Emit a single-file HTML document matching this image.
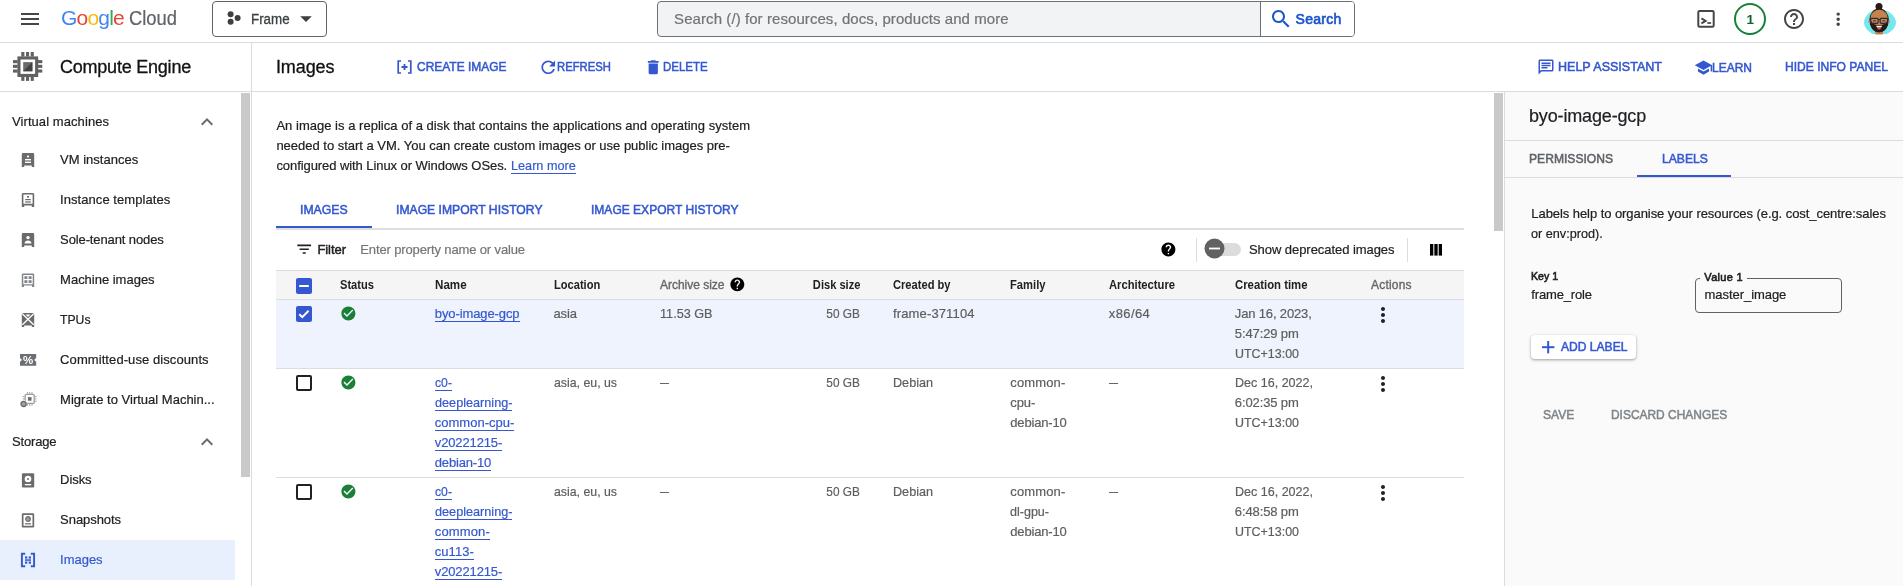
<!DOCTYPE html>
<html lang="en"><head><meta charset="utf-8"><title>Images – Compute Engine – Frame – Google Cloud console</title>
<style>
*{box-sizing:border-box;margin:0;padding:0}
html,body{width:1903px;height:586px;overflow:hidden;background:#fff}
body{position:relative;font-family:"Liberation Sans", sans-serif;font-size:13px;color:#202124}
.t{position:absolute;white-space:nowrap;line-height:1;text-decoration:none}
.i{position:absolute;display:block;overflow:visible}
.b{position:absolute}
#app{position:absolute;left:0;top:0;width:1903px;height:586px;overflow:hidden;will-change:transform}
</style></head>
<body>
<div id="app">
<header>
<div class="b" style="left:0px;top:42px;width:1903px;height:1px;background:#dadce0"></div>
<svg class="i" style="left:18px;top:7px" width="24" height="24" viewBox="0 0 24 24" fill="#444746" ><path d="M3 18h18v-2H3v2zm0-5h18v-2H3v2zm0-7v2h18V6H3z"/></svg>
<span class="t" style="left:61px;top:7px;font-size:21px;letter-spacing:-0.8px"><span style="color:#4285f4">G</span><span style="color:#ea4335">o</span><span style="color:#fbbc04">o</span><span style="color:#4285f4">g</span><span style="color:#34a853">l</span><span style="color:#ea4335">e</span></span>
<span class="t" style="font-size:20.5px;color:#5f6368;top:8px;left:129.00px;-webkit-text-stroke:0.2px #5f6368;transform:scaleX(0.8961);transform-origin:left 50%;">Cloud</span>
<div class="b" style="left:212px;top:1px;width:115px;height:36px;border:1px solid #5f6368;border-radius:4px"></div>
<svg class="i" style="left:226px;top:10px" width="16" height="16" viewBox="0 0 16 16" fill="#3c4043"><circle cx="4.6" cy="4.2" r="3"/><circle cx="4.6" cy="11.8" r="3"/><circle cx="11.6" cy="8" r="3"/></svg>
<span class="t" style="font-size:14px;color:#3c4043;top:12px;left:250.70px;-webkit-text-stroke:0.3px #3c4043;transform:scaleX(0.9542);transform-origin:left 50%;">Frame</span>
<svg class="i" style="left:300px;top:16px" width="12" height="7" viewBox="0 0 12 7" fill="#3c4043"><path d="M.2.3h11.600L6 6.100z"/></svg>
<div class="b" style="left:657px;top:1px;width:698px;height:36px;border:1px solid #6b7075;border-radius:4px;background:#f1f3f4"></div>
<div class="b" style="left:1260px;top:2px;width:94px;height:34px;background:#fff;border-left:1px solid #6b7075;border-radius:0 3px 3px 0"></div>
<span class="t" style="font-size:15px;color:#717375;top:11px;left:674.10px;-webkit-text-stroke:0.2px #717375;letter-spacing:0.075px;">Search (/) for resources, docs, products and more</span>
<svg class="i" style="left:1269px;top:7px" width="24" height="24" viewBox="0 0 24 24" fill="#1b55cb" ><path d="M15.5 14h-.79l-.28-.27C15.41 12.59 16 11.11 16 9.5 16 5.91 13.09 3 9.5 3S3 5.91 3 9.5 5.91 16 9.5 16c1.61 0 3.09-.59 4.23-1.57l.27.28v.79l5 4.99L20.49 19l-4.99-5zm-6 0C7.01 14 5 11.99 5 9.5S7.01 5 9.5 5 14 7.01 14 9.5 11.99 14 9.5 14z"/></svg>
<span class="t" style="font-size:14px;color:#1b55cb;top:12px;left:1295.60px;-webkit-text-stroke:0.65px #1b55cb;letter-spacing:0.288px;">Search</span>
<svg class="i" style="left:1696px;top:9px" width="20" height="20" viewBox="0 0 20 20" fill="none" stroke="#444746"><rect x="2.300" y="2" width="15.400" height="15.700" rx="1.300" stroke-width="2"/><path d="M5.400 9.400l4.300 2.500-4.300 2.500" stroke-width="1.900"/><path d="M11.300 14h3.800" stroke-width="1.700"/></svg>
<div class="b" style="left:1734px;top:3px;width:32px;height:32px;border:2px solid #188038;border-radius:50%"></div>
<span class="t" style="font-size:13.5px;color:#0d652d;top:13px;left:1746.40px;font-weight:700;">1</span>
<svg class="i" style="left:1781.7px;top:7px" width="24" height="24" viewBox="0 0 24 24" fill="#444746" ><path d="M11 18h2v-2h-2v2zm1-16C6.48 2 2 6.48 2 12s4.48 10 10 10 10-4.48 10-10S17.52 2 12 2zm0 18c-4.41 0-8-3.59-8-8s3.59-8 8-8 8 3.59 8 8-3.59 8-8 8zm0-14c-2.21 0-4 1.79-4 4h2c0-1.1.9-2 2-2s2 .9 2 2c0 2-3 1.75-3 5h2c0-2.25 3-2.5 3-5 0-2.21-1.79-4-4-4z"/></svg>
<svg class="i" style="left:1827.6px;top:8.8px" width="20.4" height="20.4" viewBox="0 0 24 24" fill="#444746" ><path d="M12 8c1.1 0 2-.9 2-2s-.9-2-2-2-2 .9-2 2 .9 2 2 2zm0 2c-1.1 0-2 .9-2 2s.9 2 2 2 2-.9 2-2-.9-2-2-2zm0 6c-1.1 0-2 .9-2 2s.9 2 2 2 2-.9 2-2-.9-2-2-2z"/></svg>
<svg class="i" style="left:1860px;top:0px" width="40" height="40" viewBox="0 0 40 40">
<path d="M4 22.500c0-4 3.500-9.500 8-11.500h15c5 2 9 7.500 9 11.500 0 5-5 9.500-9.500 11.500H13c-4.500-2-9-6.500-9-11.500z" fill="#74e8ee"/>
<rect x="15.200" y="29" width="7.800" height="5.400" rx="1" fill="#c17f4f"/>
<circle cx="19" cy="6.400" r="3.500" fill="#2a1a15"/>
<ellipse cx="19.100" cy="20.200" rx="9.700" ry="12" fill="#2a1a15"/>
<circle cx="9.800" cy="21.600" r="1.400" fill="#c17f4f"/>
<circle cx="28.500" cy="21.600" r="1.400" fill="#c17f4f"/>
<ellipse cx="19.100" cy="18" rx="8.600" ry="8.300" fill="#c6824f"/>
<path d="M10.400 22.500c2 1.500 4 2.300 8.700 2.300s6.700-.8 8.700-2.300c0 6-3.700 9.700-8.700 9.700s-8.700-3.700-8.700-9.700z" fill="#2a1a15"/>
<path d="M14.200 23.500c1.500-.9 3-1.200 4.900-1.200s3.400.3 4.900 1.200c-1.500.9-3 1.400-4.900 1.400s-3.400-.5-4.900-1.400z" fill="#c6824f"/>
<path d="M16.200 25.700h5.800c-.1.800-.4 1.400-.9 1.800h-4c-.5-.4-.8-1-.9-1.800z" fill="#fff"/>
<path d="M17.100 27.700h4c-.4 1.300-1.100 1.900-2 1.900s-1.600-.6-2-1.900z" fill="#e8566f"/>
<rect x="10.700" y="18.300" width="7.400" height="5" rx="1" fill="none" stroke="#2b2f33" stroke-width="1.200"/>
<rect x="20.200" y="18.300" width="7.400" height="5" rx="1" fill="none" stroke="#2b2f33" stroke-width="1.200"/>
<path d="M18 19.500h2.300M9.600 19.300h1.200M27.500 19.300h1.200" stroke="#2b2f33" stroke-width="1.100"/>
<path d="M13 21.200c.9-.7 2-.7 2.900 0M22.400 21.200c.9-.7 2-.7 2.900 0" stroke="#2a1a15" stroke-width=".9" fill="none"/>
</svg>
</header>
<section>
<div class="b" style="left:0px;top:91px;width:1903px;height:1px;background:#dadce0"></div>
<div class="b" style="left:251px;top:43px;width:1px;height:543px;background:#dadce0"></div>
<svg class="i" style="left:12.900px;top:52.100px" width="29.300" height="28.900" viewBox="0 0 29.300 28.900"><rect x="4.400" y="4.400" width="20.800" height="20.600" fill="#616161"/><rect x="7.500" y="7.500" width="14.600" height="14.400" fill="#fff"/><rect x="10.200" y="10.100" width="9.200" height="9.200" fill="#6b6b6b"/><path d="M10.200 19.300l9.200-9.200v9.200z" fill="#424242"/><rect x="8.3" y="0" width="3.100" height="4.600" fill="#616161"/><rect x="8.3" y="24.800" width="3.100" height="4.100" fill="#616161"/><rect x="0" y="8.1" width="4.600" height="3.100" fill="#616161"/><rect x="25" y="8.1" width="4.300" height="3.100" fill="#616161"/><rect x="13" y="0" width="3.100" height="4.600" fill="#616161"/><rect x="13" y="24.800" width="3.100" height="4.100" fill="#616161"/><rect x="0" y="12.8" width="4.600" height="3.100" fill="#616161"/><rect x="25" y="12.8" width="4.300" height="3.100" fill="#616161"/><rect x="17.7" y="0" width="3.100" height="4.600" fill="#616161"/><rect x="17.7" y="24.800" width="3.100" height="4.100" fill="#616161"/><rect x="0" y="17.5" width="4.600" height="3.100" fill="#616161"/><rect x="25" y="17.5" width="4.300" height="3.100" fill="#616161"/></svg>
<h1 class="t" style="font-size:18px;color:#111;top:58px;left:60.00px;-webkit-text-stroke:0.3px #111;letter-spacing:-0.223px;font-weight:400;">Compute Engine</h1>
<h2 class="t" style="font-size:18px;color:#111;top:58px;left:275.90px;-webkit-text-stroke:0.3px #111;letter-spacing:-0.086px;font-weight:400;">Images</h2>
<svg class="i" style="left:396.500px;top:60px" width="15" height="14" viewBox="0 0 15 14" fill="none" stroke="#3558d0" stroke-width="1.700"><path d="M4 1H1.200v12H4M11 1h2.800v12H11"/><path d="M7.500 4v6M4.500 7h6" stroke-width="1.800"/></svg>
<span class="t" style="font-size:13px;color:#3558d0;top:60px;left:417.20px;-webkit-text-stroke:0.55px #3558d0;transform:scaleX(0.9200);transform-origin:left 50%;">CREATE IMAGE</span>
<svg class="i" style="left:537.7px;top:56.7px" width="20.5" height="20.5" viewBox="0 0 24 24" fill="#3558d0" ><path d="M17.65 6.35C16.2 4.9 14.21 4 12 4c-4.42 0-7.99 3.58-7.99 8s3.57 8 7.99 8c3.73 0 6.84-2.55 7.73-6h-2.08c-.82 2.33-3.04 4-5.65 4-3.31 0-6-2.69-6-6s2.69-6 6-6c1.66 0 3.14.69 4.22 1.78L13 11h7V4l-2.35 2.35z"/></svg>
<span class="t" style="font-size:13px;color:#3558d0;top:60px;left:557.40px;-webkit-text-stroke:0.55px #3558d0;transform:scaleX(0.8676);transform-origin:left 50%;">REFRESH</span>
<svg class="i" style="left:643.6px;top:57.7px" width="18.5" height="18.5" viewBox="0 0 24 24" fill="#3558d0" ><path d="M6 19c0 1.1.9 2 2 2h8c1.1 0 2-.9 2-2V7H6v12zM19 4h-3.5l-1-1h-5l-1 1H5v2h14V4z"/></svg>
<span class="t" style="font-size:13px;color:#3558d0;top:60px;left:662.70px;-webkit-text-stroke:0.55px #3558d0;transform:scaleX(0.8838);transform-origin:left 50%;">DELETE</span>
<svg class="i" style="left:1537px;top:57.5px" width="18" height="18" viewBox="0 0 24 24" fill="#3558d0" ><path d="M4 4h16v12H5.17L4 17.17V4m0-2c-1.1 0-1.99.9-1.99 2L2 22l4-4h14c1.1 0 2-.9 2-2V4c0-1.1-.9-2-2-2H4zm2 10h8v2H6v-2zm0-3h12v2H6V9zm0-3h12v2H6V6z"/></svg>
<span class="t" style="font-size:13px;color:#3558d0;top:60px;left:1558.20px;-webkit-text-stroke:0.55px #3558d0;transform:scaleX(0.9638);transform-origin:left 50%;">HELP ASSISTANT</span>
<svg class="i" style="left:1693.5px;top:57.5px" width="19" height="19" viewBox="0 0 24 24" fill="#3558d0" ><path d="M5 13.18v4L12 21l7-3.82v-4L12 17l-7-3.82zM12 3L1 9l11 6 9-4.91V17h2V9L12 3z"/></svg>
<span class="t" style="font-size:13px;color:#3558d0;top:61px;left:1711.60px;-webkit-text-stroke:0.55px #3558d0;transform:scaleX(0.9225);transform-origin:left 50%;">LEARN</span>
<span class="t" style="font-size:13px;color:#3558d0;top:60px;left:1784.70px;-webkit-text-stroke:0.55px #3558d0;transform:scaleX(0.9278);transform-origin:left 50%;">HIDE INFO PANEL</span>
</section>
<nav>
<div class="b" style="left:0px;top:540px;width:235px;height:40px;background:#e8f0fe"></div>
<div class="b" style="left:241.4px;top:93px;width:8.2px;height:384px;background:#c9c9c9"></div>
<span class="t" style="font-size:13px;color:#202124;top:115px;left:12.00px;-webkit-text-stroke:0.2px #202124;letter-spacing:0.075px;">Virtual machines</span>
<svg class="i" style="left:195.2px;top:110px" width="24" height="24" viewBox="0 0 24 24" fill="#6b6b6b" ><path d="M12 8l-6 6 1.41 1.41L12 10.83l4.59 4.58L18 14z"/></svg>
<span class="t" style="font-size:13px;color:#202124;top:435px;left:12.00px;-webkit-text-stroke:0.2px #202124;letter-spacing:-0.174px;">Storage</span>
<svg class="i" style="left:195.2px;top:430px" width="24" height="24" viewBox="0 0 24 24" fill="#6b6b6b" ><path d="M12 8l-6 6 1.41 1.41L12 10.83l4.59 4.58L18 14z"/></svg>
<span class="t" style="font-size:13px;color:#202124;top:153px;left:60.10px;-webkit-text-stroke:0.2px #202124;letter-spacing:0.005px;">VM instances</span>
<span class="t" style="font-size:13px;color:#202124;top:193px;left:60.10px;-webkit-text-stroke:0.2px #202124;letter-spacing:0.057px;">Instance templates</span>
<span class="t" style="font-size:13px;color:#202124;top:233px;left:60.10px;-webkit-text-stroke:0.2px #202124;letter-spacing:-0.114px;">Sole-tenant nodes</span>
<span class="t" style="font-size:13px;color:#202124;top:273px;left:60.10px;-webkit-text-stroke:0.2px #202124;letter-spacing:-0.012px;">Machine images</span>
<span class="t" style="font-size:13px;color:#202124;top:313px;left:60.10px;-webkit-text-stroke:0.2px #202124;transform:scaleX(0.9385);transform-origin:left 50%;">TPUs</span>
<span class="t" style="font-size:13px;color:#202124;top:353px;left:60.10px;-webkit-text-stroke:0.2px #202124;letter-spacing:0.083px;">Committed-use discounts</span>
<span class="t" style="font-size:13px;color:#202124;top:393px;left:60.10px;-webkit-text-stroke:0.2px #202124;letter-spacing:0.004px;">Migrate to Virtual Machin...</span>
<span class="t" style="font-size:13px;color:#202124;top:473px;left:60.10px;-webkit-text-stroke:0.2px #202124;letter-spacing:-0.070px;">Disks</span>
<span class="t" style="font-size:13px;color:#202124;top:513px;left:60.10px;-webkit-text-stroke:0.2px #202124;letter-spacing:-0.055px;">Snapshots</span>
<span class="t" style="font-size:13px;color:#3558d0;top:553px;left:60.10px;-webkit-text-stroke:0.2px #3558d0;letter-spacing:-0.028px;">Images</span>
<svg class="i" style="left:21px;top:152.5px" width="14" height="16" viewBox="0 0 14 16" fill="#6b6b6b"><path d="M2.200 0h9.600a1.400 1.400 0 0 1 1.400 1.400V14h-2.400v-1.600H3.200V14H.8V1.400A1.400 1.400 0 0 1 2.200 0z"/><rect x="6" y="2.600" width="2" height="1.800" fill="#fff"/><rect x="4" y="6" width="6" height="1.400" fill="#fff"/><rect x="4" y="8.600" width="6" height="1.400" fill="#fff"/></svg>
<svg class="i" style="left:21px;top:192.5px" width="14" height="16" viewBox="0 0 14 16" fill="#6b6b6b"><path d="M2.200 0h9.600a1.400 1.400 0 0 1 1.400 1.400V14h-2.400v-1.600H3.200V14H.8V1.400A1.400 1.400 0 0 1 2.200 0zM2.400 1.600v9.200h9.200V1.600z" fill-rule="evenodd"/><rect x="6" y="3" width="2" height="1.600"/><rect x="4.200" y="6" width="5.600" height="1.200"/><rect x="4.200" y="8.400" width="5.600" height="1.200"/></svg>
<svg class="i" style="left:21px;top:232.5px" width="14" height="16" viewBox="0 0 14 16" fill="#6b6b6b"><path d="M2.200 0h9.600a1.400 1.400 0 0 1 1.400 1.400V14h-2.400v-1.600H3.200V14H.8V1.400A1.400 1.400 0 0 1 2.200 0z"/><circle cx="7" cy="4.600" r="1.700" fill="#fff"/><path d="M3.600 10.400c0-2 1.600-2.900 3.400-2.900s3.400.9 3.400 2.900z" fill="#fff"/></svg>
<svg class="i" style="left:21px;top:272.5px" width="14" height="16" viewBox="0 0 14 16" fill="#6b6b6b"><path d="M2 .5h10a1.200 1.200 0 0 1 1.200 1.200V14h-2.200v-1.400H3V14H.8V1.700A1.200 1.200 0 0 1 2 .5zM2.300 2v9.200h9.400V2z" fill-rule="evenodd" fill="#80868b"/><rect x="3.400" y="3.200" width="3" height="2.800" fill="#80868b"/><rect x="7.600" y="3.200" width="3" height="2.800" fill="#80868b"/><rect x="3.400" y="7.200" width="3" height="2.800" fill="#80868b"/><rect x="7.600" y="7.200" width="3" height="2.800" fill="#80868b"/></svg>
<svg class="i" style="left:21px;top:312.5px" width="14" height="16" viewBox="0 0 14 16" fill="#6b6b6b"><path d="M2.200 0h9.600a1.400 1.400 0 0 1 1.400 1.400V14h-2.400v-1.600H3.200V14H.8V1.400A1.400 1.400 0 0 1 2.200 0z"/><path d="M1.300.800l11.400 11M12.700.800l-11.400 11" stroke="#fff" stroke-width="1.300" fill="none"/><path d="M4.600 1.500h4.800L7 4z" fill="#fff"/></svg>
<svg class="i" style="left:20px;top:354px" width="16.200" height="11.700" viewBox="0 0 16.200 11.700"><path d="M0 0h16.200v4.200a1.600 1.600 0 0 0 0 3.300v4.200H0V7.500a1.600 1.600 0 0 0 0-3.300z" fill="#6b6f73"/><text x="8.100" y="9.900" font-family="Liberation Sans, sans-serif" font-size="11.500" font-weight="700" fill="#fff" text-anchor="middle">%</text></svg>
<svg class="i" style="left:20px;top:392px" width="17" height="16" viewBox="0 0 17 16"><rect x="5.200" y="2.400" width="9" height="9" rx="1" fill="#fff" stroke="#9aa0a6" stroke-width="1.300"/><rect x="7.900" y="5.100" width="3.600" height="3.600" fill="#6b6b6b"/><rect x="6.9" y="0" width="1" height="1.900" fill="#9aa0a6"/><rect x="6.9" y="11.900" width="1" height="1.900" fill="#9aa0a6"/><rect x="14.700" y="4.1" width="1.900" height="1" fill="#9aa0a6"/><rect x="2.800" y="4.1" width="1.900" height="1" fill="#9aa0a6"/><rect x="9.2" y="0" width="1" height="1.900" fill="#9aa0a6"/><rect x="9.2" y="11.900" width="1" height="1.900" fill="#9aa0a6"/><rect x="14.700" y="6.4" width="1.900" height="1" fill="#9aa0a6"/><rect x="2.800" y="6.4" width="1.900" height="1" fill="#9aa0a6"/><rect x="11.5" y="0" width="1" height="1.900" fill="#9aa0a6"/><rect x="11.5" y="11.900" width="1" height="1.900" fill="#9aa0a6"/><rect x="14.700" y="8.7" width="1.900" height="1" fill="#9aa0a6"/><rect x="2.800" y="8.7" width="1.900" height="1" fill="#9aa0a6"/><circle cx="3.600" cy="11.900" r="3.600" fill="#fff"/><circle cx="3.600" cy="11.900" r="2.600" fill="#9aa0a6" stroke="#6b6b6b" stroke-width="1.300"/></svg>
<svg class="i" style="left:21px;top:472.5px" width="14" height="16" viewBox="0 0 14 16" fill="#6b6b6b"><rect x=".9" y=".2" width="12.300" height="14.300" rx="1.200"/><circle cx="7" cy="6" r="3.300" fill="#fff"/><circle cx="7" cy="6" r="1" /><rect x="3.800" y="11" width="6.400" height="1.300" fill="#fff"/></svg>
<svg class="i" style="left:21px;top:512.7px" width="14" height="16" viewBox="0 0 14 16" fill="#6b6b6b"><path d="M2 .2h10a1.200 1.200 0 0 1 1.200 1.200v11.900a1.200 1.200 0 0 1-1.200 1.200H2a1.200 1.200 0 0 1-1.200-1.200V1.400A1.200 1.200 0 0 1 2 .2zM2.500 1.900v10.900h9V1.900z" fill-rule="evenodd"/><circle cx="7" cy="6" r="2.300" fill="#9aa0a6" stroke="#6b6b6b" stroke-width="1.200"/><rect x="4" y="10.200" width="6" height="1.200"/></svg>
<svg class="i" style="left:20px;top:551.800px" width="16" height="16" viewBox="0 0 16 16" fill="#3558d0"><path d="M5.200 1.700H1.900v12.600h3.300M10.800 1.700h3.300v12.600h-3.300" fill="none" stroke="#3558d0" stroke-width="1.900"/><rect x="5" y="4.400" width="2.300" height="2.200"/><rect x="8.700" y="4.400" width="2.300" height="2.200"/><rect x="5" y="7.300" width="6" height="1.500"/><rect x="5" y="9.500" width="2.300" height="2.200"/><rect x="8.700" y="9.500" width="2.300" height="2.200"/></svg>
</nav>
<main>
<div class="b" style="left:1494.4px;top:93px;width:8.4px;height:138px;background:#c9c9c9"></div>
<p class="t" style="font-size:13px;color:#202124;top:119px;left:276.40px;-webkit-text-stroke:0.2px #202124;letter-spacing:0.021px;">An image is a replica of a disk that contains the applications and operating system</p>
<p class="t" style="font-size:13px;color:#202124;top:139px;left:276.40px;-webkit-text-stroke:0.2px #202124;letter-spacing:-0.014px;">needed to start a VM. You can create custom images or use public images pre-</p>
<p class="t" style="font-size:13px;color:#202124;top:159px;left:276.40px;-webkit-text-stroke:0.2px #202124;letter-spacing:-0.070px;">configured with Linux or Windows OSes.</p>
<a href="#" class="t" style="font-size:13px;color:#3558d0;top:159px;left:511.20px;-webkit-text-stroke:0.2px #3558d0;transform:scaleX(0.9747);transform-origin:left 50%;">Learn more</a>
<div class="b" style="left:511.2px;top:173px;width:64.8px;height:1px;background:#3558d0"></div>
<div class="b" style="left:276px;top:228px;width:1188px;height:2px;background:#dedede"></div>
<div class="b" style="left:276px;top:226px;width:96px;height:2px;background:#3558d0"></div>
<span class="t" style="font-size:13px;color:#3558d0;top:203px;left:300.10px;-webkit-text-stroke:0.55px #3558d0;transform:scaleX(0.9431);transform-origin:left 50%;">IMAGES</span>
<span class="t" style="font-size:13px;color:#3558d0;top:203px;left:396.20px;-webkit-text-stroke:0.55px #3558d0;transform:scaleX(0.9360);transform-origin:left 50%;">IMAGE IMPORT HISTORY</span>
<span class="t" style="font-size:13px;color:#3558d0;top:203px;left:591.00px;-webkit-text-stroke:0.55px #3558d0;transform:scaleX(0.9252);transform-origin:left 50%;">IMAGE EXPORT HISTORY</span>
<svg class="i" style="left:294.8px;top:240px" width="18.4" height="18.4" viewBox="0 0 24 24" fill="#202124" ><path d="M10 18h4v-2h-4v2zM3 6v2h18V6H3zm3 7h12v-2H6v2z"/></svg>
<span class="t" style="font-size:13px;color:#202124;top:243px;left:317.40px;-webkit-text-stroke:0.45px #202124;letter-spacing:-0.058px;">Filter</span>
<span class="t" style="font-size:13px;color:#757575;top:243px;left:360.30px;-webkit-text-stroke:0.2px #757575;letter-spacing:-0.132px;">Enter property name or value</span>
<svg class="i" style="left:1159.8px;top:241.4px" width="16.8" height="16.8" viewBox="0 0 24 24" fill="#000" ><path d="M12 2C6.48 2 2 6.48 2 12s4.48 10 10 10 10-4.48 10-10S17.52 2 12 2zm1 17h-2v-2h2v2zm2.07-7.75l-.9.92C13.45 12.9 13 13.5 13 15h-2v-.5c0-1.1.45-2.1 1.17-2.83l1.24-1.26c.37-.36.59-.86.59-1.41 0-1.1-.9-2-2-2s-2 .9-2 2H8c0-2.21 1.79-4 4-4s4 1.79 4 4c0 .88-.36 1.68-.93 2.25z"/></svg>
<div class="b" style="left:1196px;top:238px;width:1px;height:24px;background:#dadce0"></div>
<div class="b" style="left:1212px;top:242.5px;width:29px;height:13px;background:#dcdcdc;border-radius:6.500px"></div>
<svg class="i" style="left:1204.300px;top:238.300px" width="21" height="21" viewBox="0 0 21 21"><circle cx="10.500" cy="10.500" r="10" fill="#616161"/><rect x="5" y="9.600" width="11" height="1.800" fill="#fff"/></svg>
<span class="t" style="font-size:13px;color:#202124;top:243px;left:1249.00px;-webkit-text-stroke:0.2px #202124;letter-spacing:-0.057px;">Show deprecated images</span>
<div class="b" style="left:1407px;top:238px;width:1px;height:24px;background:#dadce0"></div>
<svg class="i" style="left:1429.700px;top:244.200px" width="12" height="11.600" viewBox="0 0 12 11.600" fill="#000"><rect width="3.300" height="11.600"/><rect x="4.350" width="3.300" height="11.600"/><rect x="8.700" width="3.300" height="11.600"/></svg>
<div class="b" style="left:276px;top:270px;width:1188px;height:30px;background:#f5f5f5;border-top:1px solid #dadce0;border-bottom:1px solid #dadce0"></div>
<div class="b" style="left:276px;top:300px;width:1188px;height:68px;background:#eff3fd"></div>
<div class="b" style="left:276px;top:368px;width:1188px;height:1px;background:#dcdcdc"></div>
<div class="b" style="left:276px;top:477px;width:1188px;height:1px;background:#dcdcdc"></div>
<svg class="i" style="left:296px;top:278px" width="16" height="16" viewBox="0 0 16 16"><rect width="16" height="16" rx="2" fill="#3558d0"/><rect x="3.200" y="7" width="9.600" height="2" fill="#fff"/></svg>
<b class="t" style="font-size:12px;color:#202124;top:279px;left:340.30px;font-weight:700;transform:scaleX(0.9240);transform-origin:left 50%;">Status</b>
<b class="t" style="font-size:12px;color:#202124;top:279px;left:434.80px;font-weight:700;transform:scaleX(0.9667);transform-origin:left 50%;">Name</b>
<b class="t" style="font-size:12px;color:#202124;top:279px;left:553.50px;font-weight:700;transform:scaleX(0.9240);transform-origin:left 50%;">Location</b>
<span class="t" style="font-size:12px;color:#666;top:279px;left:660.00px;-webkit-text-stroke:0.35px #666;letter-spacing:-0.017px;">Archive size</span>
<svg class="i" style="left:728.75px;top:276.45px" width="16.7" height="16.7" viewBox="0 0 24 24" fill="#000" ><path d="M12 2C6.48 2 2 6.48 2 12s4.48 10 10 10 10-4.48 10-10S17.52 2 12 2zm1 17h-2v-2h2v2zm2.07-7.75l-.9.92C13.45 12.9 13 13.5 13 15h-2v-.5c0-1.1.45-2.1 1.17-2.83l1.24-1.26c.37-.36.59-.86.59-1.41 0-1.1-.9-2-2-2s-2 .9-2 2H8c0-2.21 1.79-4 4-4s4 1.79 4 4c0 .88-.36 1.68-.93 2.25z"/></svg>
<b class="t" style="font-size:12px;color:#202124;top:279px;right:1042.70px;font-weight:700;transform:scaleX(0.9246);transform-origin:right 50%;">Disk size</b>
<b class="t" style="font-size:12px;color:#202124;top:279px;left:893.00px;font-weight:700;transform:scaleX(0.9270);transform-origin:left 50%;">Created by</b>
<b class="t" style="font-size:12px;color:#202124;top:279px;left:1010.30px;font-weight:700;transform:scaleX(0.9338);transform-origin:left 50%;">Family</b>
<b class="t" style="font-size:12px;color:#202124;top:279px;left:1108.80px;font-weight:700;transform:scaleX(0.9337);transform-origin:left 50%;">Architecture</b>
<b class="t" style="font-size:12px;color:#202124;top:279px;left:1234.80px;font-weight:700;transform:scaleX(0.9454);transform-origin:left 50%;">Creation time</b>
<span class="t" style="font-size:12px;color:#666;top:279px;left:1371.00px;-webkit-text-stroke:0.35px #666;letter-spacing:0.190px;">Actions</span>
<svg class="i" style="left:296px;top:306px" width="16" height="16" viewBox="0 0 16 16"><rect width="16" height="16" rx="2" fill="#3558d0"/><path d="M3.300 8.200l3 3 6.300-6.400" fill="none" stroke="#fff" stroke-width="2"/></svg>
<svg class="i" style="left:340.3px;top:305.2px" width="16.8" height="16.8" viewBox="0 0 24 24" fill="#1a7f37" ><path d="M12 2C6.48 2 2 6.48 2 12s4.48 10 10 10 10-4.48 10-10S17.52 2 12 2zm-2 15l-5-5 1.41-1.41L10 14.17l7.59-7.59L19 8l-9 9z"/></svg>
<a href="#" class="t" style="font-size:13px;color:#3558d0;top:307px;left:434.80px;-webkit-text-stroke:0.2px #3558d0;letter-spacing:-0.100px;">byo-image-gcp</a>
<div class="b" style="left:434.8px;top:321px;width:84.8px;height:1px;background:#3558d0"></div>
<span class="t" style="font-size:13px;color:#5e5e5e;top:307px;left:553.50px;-webkit-text-stroke:0.2px #5e5e5e;letter-spacing:-0.120px;">asia</span>
<span class="t" style="font-size:13px;color:#5e5e5e;top:307px;left:660.00px;-webkit-text-stroke:0.2px #5e5e5e;transform:scaleX(0.9728);transform-origin:left 50%;">11.53 GB</span>
<span class="t" style="font-size:13px;color:#5e5e5e;top:307px;right:1042.70px;-webkit-text-stroke:0.2px #5e5e5e;transform:scaleX(0.9089);transform-origin:right 50%;">50 GB</span>
<span class="t" style="font-size:13px;color:#5e5e5e;top:307px;left:893.00px;-webkit-text-stroke:0.2px #5e5e5e;letter-spacing:0.138px;">frame-371104</span>
<span class="t" style="font-size:13px;color:#5e5e5e;top:307px;left:1108.80px;-webkit-text-stroke:0.2px #5e5e5e;letter-spacing:0.391px;">x86/64</span>
<span class="t" style="font-size:13px;color:#5e5e5e;top:307px;left:1234.80px;-webkit-text-stroke:0.2px #5e5e5e;letter-spacing:-0.150px;">Jan 16, 2023,</span>
<span class="t" style="font-size:13px;color:#5e5e5e;top:327px;left:1234.80px;-webkit-text-stroke:0.2px #5e5e5e;letter-spacing:-0.116px;">5:47:29 pm</span>
<span class="t" style="font-size:13px;color:#5e5e5e;top:347px;left:1234.80px;-webkit-text-stroke:0.2px #5e5e5e;transform:scaleX(0.9575);transform-origin:left 50%;">UTC+13:00</span>
<svg class="i" style="left:1371px;top:302.8px" width="24" height="24" viewBox="0 0 24 24" fill="#202124" ><path d="M12 8c1.1 0 2-.9 2-2s-.9-2-2-2-2 .9-2 2 .9 2 2 2zm0 2c-1.1 0-2 .9-2 2s.9 2 2 2 2-.9 2-2-.9-2-2-2zm0 6c-1.1 0-2 .9-2 2s.9 2 2 2 2-.9 2-2-.9-2-2-2z"/></svg>
<div class="b" style="left:296px;top:375px;width:16px;height:16px;border:2px solid #202124;border-radius:2px;background:#fff"></div>
<svg class="i" style="left:340.3px;top:374.2px" width="16.8" height="16.8" viewBox="0 0 24 24" fill="#1a7f37" ><path d="M12 2C6.48 2 2 6.48 2 12s4.48 10 10 10 10-4.48 10-10S17.52 2 12 2zm-2 15l-5-5 1.41-1.41L10 14.17l7.59-7.59L19 8l-9 9z"/></svg>
<a href="#" class="t" style="font-size:13px;color:#3558d0;top:376px;left:434.80px;-webkit-text-stroke:0.2px #3558d0;transform:scaleX(0.9412);transform-origin:left 50%;">c0-</a>
<div class="b" style="left:434.8px;top:390px;width:17px;height:1px;background:#3558d0"></div>
<a href="#" class="t" style="font-size:13px;color:#3558d0;top:396px;left:434.80px;-webkit-text-stroke:0.2px #3558d0;transform:scaleX(0.9747);transform-origin:left 50%;">deeplearning-</a>
<div class="b" style="left:434.8px;top:410px;width:77.5px;height:1px;background:#3558d0"></div>
<a href="#" class="t" style="font-size:13px;color:#3558d0;top:416px;left:434.80px;-webkit-text-stroke:0.2px #3558d0;letter-spacing:0.003px;">common-cpu-</a>
<div class="b" style="left:434.8px;top:430px;width:79.5px;height:1px;background:#3558d0"></div>
<a href="#" class="t" style="font-size:13px;color:#3558d0;top:436px;left:434.80px;-webkit-text-stroke:0.2px #3558d0;letter-spacing:-0.130px;">v20221215-</a>
<div class="b" style="left:434.8px;top:450px;width:67.5px;height:1px;background:#3558d0"></div>
<a href="#" class="t" style="font-size:13px;color:#3558d0;top:456px;left:434.80px;-webkit-text-stroke:0.2px #3558d0;letter-spacing:-0.166px;">debian-10</a>
<div class="b" style="left:434.8px;top:470px;width:56.5px;height:1px;background:#3558d0"></div>
<span class="t" style="font-size:13px;color:#5e5e5e;top:376px;left:553.50px;-webkit-text-stroke:0.2px #5e5e5e;transform:scaleX(0.9474);transform-origin:left 50%;">asia, eu, us</span>
<span class="t" style="font-size:13px;color:#5e5e5e;top:376px;left:660.00px;-webkit-text-stroke:0.2px #5e5e5e;transform:scaleX(0.6923);transform-origin:left 50%;">—</span>
<span class="t" style="font-size:13px;color:#5e5e5e;top:376px;right:1042.70px;-webkit-text-stroke:0.2px #5e5e5e;transform:scaleX(0.9089);transform-origin:right 50%;">50 GB</span>
<span class="t" style="font-size:13px;color:#5e5e5e;top:376px;left:893.00px;-webkit-text-stroke:0.2px #5e5e5e;transform:scaleX(0.9708);transform-origin:left 50%;">Debian</span>
<span class="t" style="font-size:13px;color:#5e5e5e;top:376px;left:1010.30px;-webkit-text-stroke:0.2px #5e5e5e;letter-spacing:0.135px;">common-</span>
<span class="t" style="font-size:13px;color:#5e5e5e;top:396px;left:1010.30px;-webkit-text-stroke:0.2px #5e5e5e;letter-spacing:-0.099px;">cpu-</span>
<span class="t" style="font-size:13px;color:#5e5e5e;top:416px;left:1010.30px;-webkit-text-stroke:0.2px #5e5e5e;letter-spacing:-0.166px;">debian-10</span>
<span class="t" style="font-size:13px;color:#5e5e5e;top:376px;left:1108.80px;-webkit-text-stroke:0.2px #5e5e5e;transform:scaleX(0.6923);transform-origin:left 50%;">—</span>
<span class="t" style="font-size:13px;color:#5e5e5e;top:376px;left:1234.80px;-webkit-text-stroke:0.2px #5e5e5e;transform:scaleX(0.9635);transform-origin:left 50%;">Dec 16, 2022,</span>
<span class="t" style="font-size:13px;color:#5e5e5e;top:396px;left:1234.80px;-webkit-text-stroke:0.2px #5e5e5e;letter-spacing:-0.116px;">6:02:35 pm</span>
<span class="t" style="font-size:13px;color:#5e5e5e;top:416px;left:1234.80px;-webkit-text-stroke:0.2px #5e5e5e;transform:scaleX(0.9575);transform-origin:left 50%;">UTC+13:00</span>
<svg class="i" style="left:1371px;top:371.8px" width="24" height="24" viewBox="0 0 24 24" fill="#202124" ><path d="M12 8c1.1 0 2-.9 2-2s-.9-2-2-2-2 .9-2 2 .9 2 2 2zm0 2c-1.1 0-2 .9-2 2s.9 2 2 2 2-.9 2-2-.9-2-2-2zm0 6c-1.1 0-2 .9-2 2s.9 2 2 2 2-.9 2-2-.9-2-2-2z"/></svg>
<div class="b" style="left:296px;top:484px;width:16px;height:16px;border:2px solid #202124;border-radius:2px;background:#fff"></div>
<svg class="i" style="left:340.3px;top:483.2px" width="16.8" height="16.8" viewBox="0 0 24 24" fill="#1a7f37" ><path d="M12 2C6.48 2 2 6.48 2 12s4.48 10 10 10 10-4.48 10-10S17.52 2 12 2zm-2 15l-5-5 1.41-1.41L10 14.17l7.59-7.59L19 8l-9 9z"/></svg>
<a href="#" class="t" style="font-size:13px;color:#3558d0;top:485px;left:434.80px;-webkit-text-stroke:0.2px #3558d0;transform:scaleX(0.9412);transform-origin:left 50%;">c0-</a>
<div class="b" style="left:434.8px;top:499px;width:17px;height:1px;background:#3558d0"></div>
<a href="#" class="t" style="font-size:13px;color:#3558d0;top:505px;left:434.80px;-webkit-text-stroke:0.2px #3558d0;transform:scaleX(0.9747);transform-origin:left 50%;">deeplearning-</a>
<div class="b" style="left:434.8px;top:519px;width:77.5px;height:1px;background:#3558d0"></div>
<a href="#" class="t" style="font-size:13px;color:#3558d0;top:525px;left:434.80px;-webkit-text-stroke:0.2px #3558d0;letter-spacing:0.135px;">common-</a>
<div class="b" style="left:434.8px;top:539px;width:55px;height:1px;background:#3558d0"></div>
<a href="#" class="t" style="font-size:13px;color:#3558d0;top:545px;left:434.80px;-webkit-text-stroke:0.2px #3558d0;letter-spacing:0.041px;">cu113-</a>
<div class="b" style="left:434.8px;top:559px;width:39px;height:1px;background:#3558d0"></div>
<a href="#" class="t" style="font-size:13px;color:#3558d0;top:565px;left:434.80px;-webkit-text-stroke:0.2px #3558d0;letter-spacing:-0.130px;">v20221215-</a>
<div class="b" style="left:434.8px;top:579px;width:67.5px;height:1px;background:#3558d0"></div>
<span class="t" style="font-size:13px;color:#5e5e5e;top:485px;left:553.50px;-webkit-text-stroke:0.2px #5e5e5e;transform:scaleX(0.9474);transform-origin:left 50%;">asia, eu, us</span>
<span class="t" style="font-size:13px;color:#5e5e5e;top:485px;left:660.00px;-webkit-text-stroke:0.2px #5e5e5e;transform:scaleX(0.6923);transform-origin:left 50%;">—</span>
<span class="t" style="font-size:13px;color:#5e5e5e;top:485px;right:1042.70px;-webkit-text-stroke:0.2px #5e5e5e;transform:scaleX(0.9089);transform-origin:right 50%;">50 GB</span>
<span class="t" style="font-size:13px;color:#5e5e5e;top:485px;left:893.00px;-webkit-text-stroke:0.2px #5e5e5e;transform:scaleX(0.9708);transform-origin:left 50%;">Debian</span>
<span class="t" style="font-size:13px;color:#5e5e5e;top:485px;left:1010.30px;-webkit-text-stroke:0.2px #5e5e5e;letter-spacing:0.135px;">common-</span>
<span class="t" style="font-size:13px;color:#5e5e5e;top:505px;left:1010.30px;-webkit-text-stroke:0.2px #5e5e5e;transform:scaleX(0.9637);transform-origin:left 50%;">dl-gpu-</span>
<span class="t" style="font-size:13px;color:#5e5e5e;top:525px;left:1010.30px;-webkit-text-stroke:0.2px #5e5e5e;letter-spacing:-0.166px;">debian-10</span>
<span class="t" style="font-size:13px;color:#5e5e5e;top:485px;left:1108.80px;-webkit-text-stroke:0.2px #5e5e5e;transform:scaleX(0.6923);transform-origin:left 50%;">—</span>
<span class="t" style="font-size:13px;color:#5e5e5e;top:485px;left:1234.80px;-webkit-text-stroke:0.2px #5e5e5e;transform:scaleX(0.9635);transform-origin:left 50%;">Dec 16, 2022,</span>
<span class="t" style="font-size:13px;color:#5e5e5e;top:505px;left:1234.80px;-webkit-text-stroke:0.2px #5e5e5e;letter-spacing:-0.116px;">6:48:58 pm</span>
<span class="t" style="font-size:13px;color:#5e5e5e;top:525px;left:1234.80px;-webkit-text-stroke:0.2px #5e5e5e;transform:scaleX(0.9575);transform-origin:left 50%;">UTC+13:00</span>
<svg class="i" style="left:1371px;top:480.8px" width="24" height="24" viewBox="0 0 24 24" fill="#202124" ><path d="M12 8c1.1 0 2-.9 2-2s-.9-2-2-2-2 .9-2 2 .9 2 2 2zm0 2c-1.1 0-2 .9-2 2s.9 2 2 2 2-.9 2-2-.9-2-2-2zm0 6c-1.1 0-2 .9-2 2s.9 2 2 2 2-.9 2-2-.9-2-2-2z"/></svg>
</main>
<aside>
<div class="b" style="left:1504px;top:92px;width:399px;height:494px;background:#fafafa;border-left:1px solid #dadce0"></div>
<h3 class="t" style="font-size:18px;color:#202124;top:107px;left:1529.00px;-webkit-text-stroke:0.2px #202124;letter-spacing:-0.155px;font-weight:400;">byo-image-gcp</h3>
<div class="b" style="left:1505px;top:140px;width:398px;height:1px;background:#dadce0"></div>
<div class="b" style="left:1505px;top:177px;width:398px;height:1px;background:#dadce0"></div>
<div class="b" style="left:1637px;top:175px;width:94px;height:2px;background:#3558d0"></div>
<span class="t" style="font-size:13px;color:#5f6368;top:152px;left:1529.20px;-webkit-text-stroke:0.55px #5f6368;transform:scaleX(0.9314);transform-origin:left 50%;">PERMISSIONS</span>
<span class="t" style="font-size:13px;color:#3558d0;top:152px;left:1661.60px;-webkit-text-stroke:0.55px #3558d0;transform:scaleX(0.9338);transform-origin:left 50%;">LABELS</span>
<p class="t" style="font-size:13px;color:#202124;top:207px;left:1531.30px;-webkit-text-stroke:0.2px #202124;letter-spacing:-0.063px;">Labels help to organise your resources (e.g. cost_centre:sales</p>
<p class="t" style="font-size:13px;color:#202124;top:227px;left:1531.30px;-webkit-text-stroke:0.2px #202124;transform:scaleX(0.9728);transform-origin:left 50%;">or env:prod).</p>
<b class="t" style="font-size:11px;color:#202124;top:271px;left:1531.30px;-webkit-text-stroke:0.6px #202124;transform:scaleX(0.9630);transform-origin:left 50%;font-weight:400;">Key 1</b>
<span class="t" style="font-size:13px;color:#202124;top:288px;left:1531.30px;-webkit-text-stroke:0.2px #202124;letter-spacing:-0.149px;">frame_role</span>
<div class="b" style="left:1695px;top:278px;width:147px;height:35px;border:1px solid #5f6368;border-radius:4px"></div>
<div class="b" style="left:1700px;top:277px;width:47px;height:4px;background:#fafafa"></div>
<b class="t" style="font-size:11px;color:#202124;top:272px;left:1704.30px;-webkit-text-stroke:0.6px #202124;letter-spacing:0.317px;font-weight:400;">Value 1</b>
<span class="t" style="font-size:13px;color:#202124;top:288px;left:1704.60px;-webkit-text-stroke:0.2px #202124;letter-spacing:-0.061px;">master_image</span>
<div class="b" style="left:1531px;top:335px;width:105px;height:24px;background:#fff;border-radius:4px;box-shadow:0 1px 2px rgba(60,64,67,.3),0 1px 3px 1px rgba(60,64,67,.15)"></div>
<svg class="i" style="left:1541.700px;top:341px" width="12.400" height="12.400" viewBox="0 0 12.400 12.400" fill="#3558d0"><rect x="5.200" width="2" height="12.400"/><rect y="5.200" width="12.400" height="2"/></svg>
<span class="t" style="font-size:13px;color:#3558d0;top:340px;left:1560.50px;-webkit-text-stroke:0.55px #3558d0;transform:scaleX(0.9281);transform-origin:left 50%;">ADD LABEL</span>
<span class="t" style="font-size:13px;color:#80868b;top:408px;left:1543.30px;-webkit-text-stroke:0.55px #80868b;transform:scaleX(0.9283);transform-origin:left 50%;">SAVE</span>
<span class="t" style="font-size:13px;color:#80868b;top:408px;left:1611.20px;-webkit-text-stroke:0.55px #80868b;transform:scaleX(0.9184);transform-origin:left 50%;">DISCARD CHANGES</span>
</aside>
</div>
</body></html>
